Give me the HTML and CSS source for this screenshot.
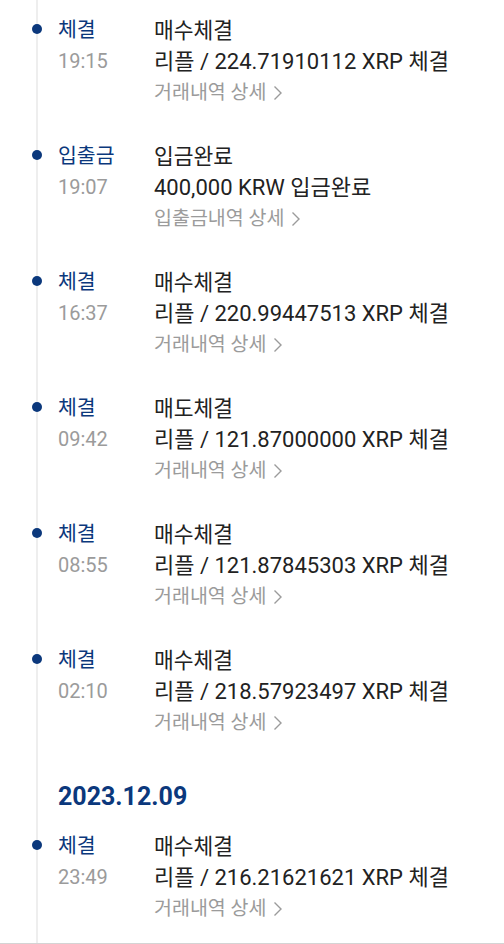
FILE: index.html
```html
<!DOCTYPE html>
<html lang="ko">
<head>
    <meta charset="UTF-8">
    <meta name="viewport" content="width=device-width, initial-scale=1.0">
    <title>거래내역</title>
    <link rel="stylesheet" href="styles.css">
</head>
<body>
    <div class="history">
        <ul class="timeline">
            <li class="event">
                <div class="kind"><span class="kind-name">체결</span><span class="time">19:15</span></div>
                <div class="detail">
                    <p class="title">매수체결</p>
                    <p class="desc">리플 / 224.71910112 XRP 체결</p>
                    <a class="more" href="#">거래내역 상세 <svg class="chevron" width="10" height="16" viewBox="0 0 10 16"><polyline points="1.5,1.5 8,8 1.5,14.5" /></svg></a>
                </div>
            </li>
            <li class="event">
                <div class="kind"><span class="kind-name">입출금</span><span class="time">19:07</span></div>
                <div class="detail">
                    <p class="title">입금완료</p>
                    <p class="desc">400,000 KRW 입금완료</p>
                    <a class="more" href="#">입출금내역 상세 <svg class="chevron" width="10" height="16" viewBox="0 0 10 16"><polyline points="1.5,1.5 8,8 1.5,14.5" /></svg></a>
                </div>
            </li>
            <li class="event">
                <div class="kind"><span class="kind-name">체결</span><span class="time">16:37</span></div>
                <div class="detail">
                    <p class="title">매수체결</p>
                    <p class="desc">리플 / 220.99447513 XRP 체결</p>
                    <a class="more" href="#">거래내역 상세 <svg class="chevron" width="10" height="16" viewBox="0 0 10 16"><polyline points="1.5,1.5 8,8 1.5,14.5" /></svg></a>
                </div>
            </li>
            <li class="event">
                <div class="kind"><span class="kind-name">체결</span><span class="time">09:42</span></div>
                <div class="detail">
                    <p class="title">매도체결</p>
                    <p class="desc">리플 / 121.87000000 XRP 체결</p>
                    <a class="more" href="#">거래내역 상세 <svg class="chevron" width="10" height="16" viewBox="0 0 10 16"><polyline points="1.5,1.5 8,8 1.5,14.5" /></svg></a>
                </div>
            </li>
            <li class="event">
                <div class="kind"><span class="kind-name">체결</span><span class="time">08:55</span></div>
                <div class="detail">
                    <p class="title">매수체결</p>
                    <p class="desc">리플 / 121.87845303 XRP 체결</p>
                    <a class="more" href="#">거래내역 상세 <svg class="chevron" width="10" height="16" viewBox="0 0 10 16"><polyline points="1.5,1.5 8,8 1.5,14.5" /></svg></a>
                </div>
            </li>
            <li class="event">
                <div class="kind"><span class="kind-name">체결</span><span class="time">02:10</span></div>
                <div class="detail">
                    <p class="title">매수체결</p>
                    <p class="desc">리플 / 218.57923497 XRP 체결</p>
                    <a class="more" href="#">거래내역 상세 <svg class="chevron" width="10" height="16" viewBox="0 0 10 16"><polyline points="1.5,1.5 8,8 1.5,14.5" /></svg></a>
                </div>
            </li>
            <li class="date">2023.12.09</li>
            <li class="event">
                <div class="kind"><span class="kind-name">체결</span><span class="time">23:49</span></div>
                <div class="detail">
                    <p class="title">매수체결</p>
                    <p class="desc">리플 / 216.21621621 XRP 체결</p>
                    <a class="more" href="#">거래내역 상세 <svg class="chevron" width="10" height="16" viewBox="0 0 10 16"><polyline points="1.5,1.5 8,8 1.5,14.5" /></svg></a>
                </div>
            </li>
        </ul>
    </div>
</body>
</html>
```
FILE: styles.css
```css
body {
    margin: 0;
    background-color: #fff;
    font-family: Roboto, "Noto Sans CJK KR", sans-serif;
    color: #222;
}

.history {
    height: 943px;
    border-bottom: 1px solid #d4d4d4;
    overflow: hidden;
}

.timeline {
    list-style: none;
    margin: 0 0 0 36px;
    padding: 5px 0 0 20px;
    height: 100%;
    border-left: 2px solid #eeeeee;
}

.event {
    position: relative;
    display: flex;
    padding: 10px 0 23px;
}

/* dot sits on top of the line */
.event::before {
    content: "";
    position: absolute;
    left: -26px;
    top: 19px;
    width: 10px;
    height: 10px;
    border-radius: 50%;
    background-color: #0b387c;
}

.kind {
    width: 96px;
    flex-shrink: 0;
    display: flex;
    flex-direction: column;
}

.kind-name {
    font-size: 20.5px;
    line-height: 31px;
    color: #0b387c;
}

.time {
    font-size: 20px;
    line-height: 31px;
    color: #9b9b9b;
}

.detail p {
    margin: 0;
    font-size: 21.5px;
    line-height: 31px;
}

.detail .desc {
    font-size: 22px;
}

.more {
    display: flex;
    align-items: center;
    gap: 7px;
    font-size: 19.5px;
    line-height: 31px;
    color: #9b9b9b;
    text-decoration: none;
}

.chevron polyline {
    fill: none;
    stroke: #9b9b9b;
    stroke-width: 1.4;
}

.date {
    font-size: 25px;
    font-weight: bold;
    line-height: 30px;
    color: #0b387c;
    padding: 21px 0 9px;
}
```
